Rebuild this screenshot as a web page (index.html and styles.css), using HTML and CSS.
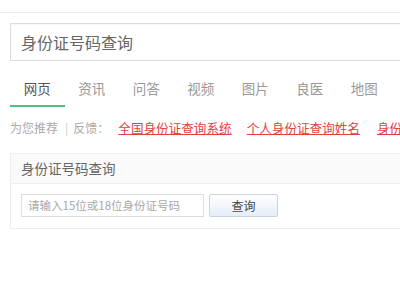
FILE: index.html
```html
<!DOCTYPE html>
<html lang="zh-CN">
<head>
<meta charset="utf-8">
<link rel="stylesheet" href="styles.css">
</head>
<body>
<div class="page">
  <div class="topbar"></div>
  <div class="search">身份证号码查询</div>
  <div class="tabs">
    <div class="tab active">网页</div>
    <div class="tab">资讯</div>
    <div class="tab">问答</div>
    <div class="tab">视频</div>
    <div class="tab">图片</div>
    <div class="tab">良医</div>
    <div class="tab">地图</div>
  </div>
  <div class="rec">
    <span class="rec-label">为您推荐</span>
    <span class="sep">|</span>
    <span class="rec-label">反馈：</span>
    <a class="rec-link first">全国身份证查询系统</a>
    <a class="rec-link">个人身份证查询姓名</a>
    <a class="rec-link last">身份证号码查询</a>
  </div>
  <div class="card">
    <div class="card-head">身份证号码查询</div>
    <div class="card-body">
      <div class="input">请输入15位或18位身份证号码</div>
      <div class="btn">查询</div>
    </div>
  </div>
</div>
</body>
</html>
```
FILE: styles.css
```css
html, body {
  margin: 0;
  padding: 0;
  background: #fff;
}
.page {
  width: 400px;
  height: 300px;
  overflow: hidden;
  font-family: "Noto Sans CJK SC", "Noto Sans", sans-serif;
}
.topbar {
  height: 12px;
  border-bottom: 1px solid #eeeeee;
}
.search {
  box-sizing: border-box;
  margin: 10px 0 0 10px;
  width: 600px;
  height: 38px;
  border: 1px solid #dcdcdc;
  padding-left: 10px;
  display: flex;
  align-items: center;
  font-size: 16px;
  color: #666;
  box-shadow: inset 0 1px 2px rgba(0,0,0,0.04);
}
.tabs {
  display: flex;
  margin-left: 10px;
  width: 600px;
}
.tab {
  width: 54.5px;
  flex: none;
  text-align: center;
  font-size: 13.5px;
  line-height: 20px;
  padding-top: 17px;
  padding-bottom: 7px;
  border-bottom: 2px solid transparent;
  color: #999;
}
.tab.active {
  color: #555;
  border-bottom-color: #4cc080;
}
.rec {
  margin: 10px 0 0 10px;
  width: 600px;
  display: flex;
  align-items: center;
  height: 20px;
  white-space: nowrap;
  font-size: 12px;
  color: #aaa;
}
.sep {
  margin: 0 5px 0 7px;
  color: #ccc;
}
.rec-link {
  font-size: 12.6px;
  color: #e2403f;
  text-decoration: underline;
  margin-left: 15px;
}
.rec-link.first {
  margin-left: 9px;
}
.rec-link.last {
  margin-left: 17px;
}
.card {
  box-sizing: border-box;
  margin: 16px 0 0 10px;
  width: 600px;
  border: 1px solid #eeeeee;
}
.card-head {
  height: 29px;
  line-height: 29px;
  padding-left: 10px;
  font-size: 13.5px;
  color: #666;
  background: #fafafa;
  border-bottom: 1px solid #eeeeee;
}
.card-body {
  display: flex;
  gap: 5px;
  padding: 10px 10px 11px 10px;
}
.input {
  box-sizing: border-box;
  width: 183px;
  height: 23px;
  border: 1px solid #dddddd;
  padding-left: 6px;
  font-size: 11.5px;
  line-height: 21px;
  color: #a8a8a8;
}
.btn {
  box-sizing: border-box;
  width: 69px;
  height: 23px;
  border: 1px solid #c9d3e3;
  border-radius: 2px;
  background: linear-gradient(#ffffff, #e6edf8);
  text-align: center;
  font-size: 12px;
  line-height: 21px;
  color: #444;
}
```
